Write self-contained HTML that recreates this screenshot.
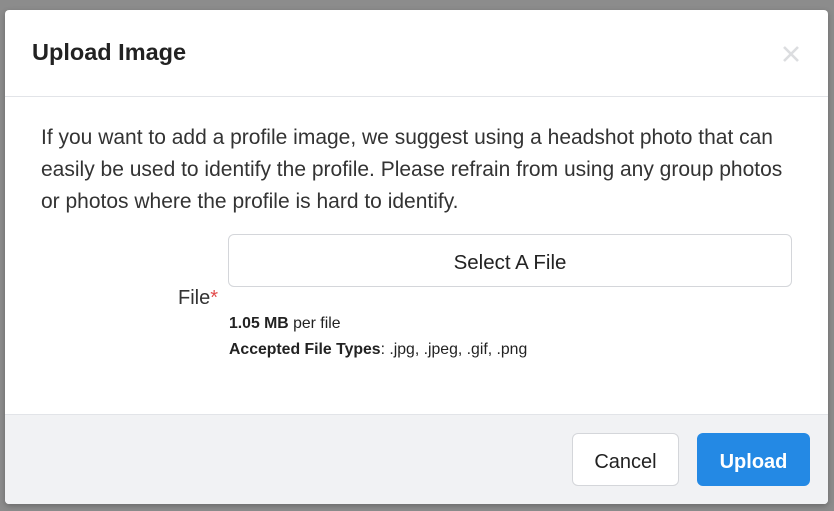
<!DOCTYPE html>
<html><head><meta charset="utf-8"><style>
html,body{margin:0;padding:0;width:834px;height:511px;overflow:hidden;background:#8c8c8c;font-family:"Liberation Sans",sans-serif;color:#222;}
.modal{position:absolute;left:5px;top:10px;width:823px;height:494px;background:#fff;border-radius:4px;overflow:hidden;box-shadow:0 2px 6px rgba(0,0,0,.25);}
.t{position:absolute;white-space:nowrap;}
.hdr{position:absolute;left:0;top:0;width:100%;height:86px;border-bottom:1px solid #e2e4e8;}
.ftr{position:absolute;left:0;top:404px;width:100%;height:90px;background:#f1f2f4;border-top:1px solid #e2e4e8;}
.btn{position:absolute;border-radius:6px;font-size:20px;text-align:center;box-sizing:border-box;}
</style></head><body>
<div class="modal">
 <div class="hdr"></div>
 <div class="t" style="left:27px;top:29px;font-size:23.5px;font-weight:bold;color:#222;">Upload Image</div>
 <svg style="position:absolute;left:777px;top:35px" width="18" height="18" viewBox="0 0 18 18"><path d="M2 2L16 16M16 2L2 16" stroke="#dcdde0" stroke-width="2.6"/></svg>
 <div class="t" style="left:36px;top:112px;font-size:21px;line-height:32px;color:#333;">
  <div>If you want to add a profile image, we suggest using a headshot photo that can</div>
  <div>easily be used to identify the profile. Please refrain from using any group photos</div>
  <div>or photos where the profile is hard to identify.</div>
 </div>
 <div style="position:absolute;left:223px;top:224px;width:564px;height:53px;border:1px solid #d4d6da;border-radius:6px;box-sizing:border-box;text-align:center;line-height:55px;font-size:20.5px;color:#222;">Select A File</div>
 <div class="t" style="left:173px;top:277px;font-size:20px;color:#333;">File<span style="color:#e24b4b">*</span></div>
 <div class="t" style="left:224px;top:305px;font-size:15.8px;color:#222;"><b>1.05 MB</b> per file</div>
 <div class="t" style="left:224px;top:331px;font-size:15.8px;color:#222;"><b>Accepted File Types</b>: .jpg, .jpeg, .gif, .png</div>
 <div class="ftr"></div>
 <div class="btn" style="left:567px;top:423px;width:107px;height:53px;background:#fff;border:1px solid #d4d6da;line-height:56px;color:#222;">Cancel</div>
 <div class="btn" style="left:692px;top:423px;width:113px;height:53px;background:#2489e4;color:#fff;font-weight:bold;line-height:58px;">Upload</div>
</div>
</body></html>
